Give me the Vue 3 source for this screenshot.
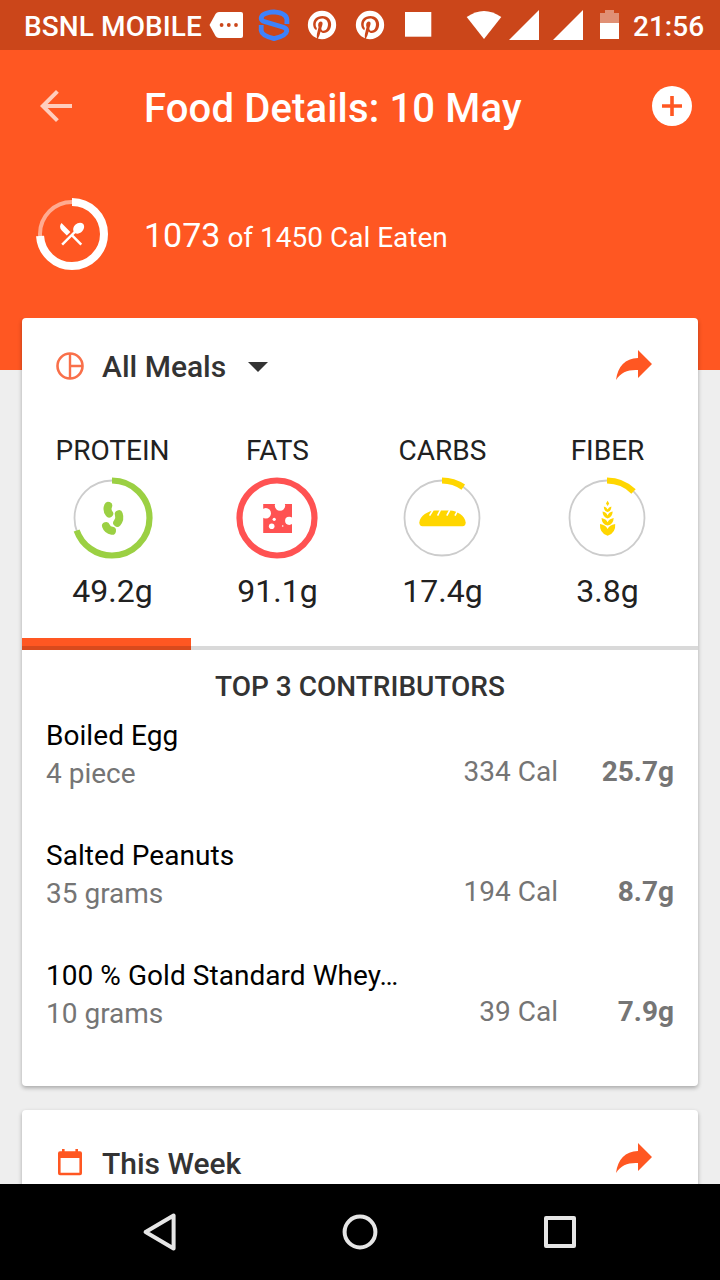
<template>
  <div class="screen">
    <div class="status-bar">
      <span class="carrier">BSNL MOBILE</span>
      <svg width="48" height="50" viewBox="0 0 48 50">
        <path d="M7.5 25 13.5 14Q14.7 12 17 12H39q2 0 2 2V36q0 2-2 2H17q-2.3 0-3.5-2z" fill="#fff" />
        <circle v-for="x in [19.6, 26.8, 34]" :key="x" :cx="x" cy="25" r="1.9" fill="#cb461a" />
      </svg>
      <svg width="48" height="50" viewBox="0 0 48 50">
        <path
          d="M36.9 24V19.5C36.6 15 33 12.6 24 11.8C15 12.4 11.4 15 11.2 18.2C11.2 20.6 13 21.2 15 21.8L33.4 27.2C35.8 28 36.8 29 36.8 31C36.4 34.4 31 37 24 38.6C17 37 11.6 34.4 11.2 30.6V25"
          fill="none"
          stroke="#3e82fb"
          stroke-width="4.8"
        />
      </svg>
      <svg v-for="n in 2" :key="n" class="pin" width="34" height="34" viewBox="0 0 24 24">
        <path :d="pinPath" fill="#fff" />
      </svg>
      <svg width="48" height="50" viewBox="0 0 48 50">
        <path d="M11 12H37.3V36.7H11z" fill="#fff" />
      </svg>
      <div class="system">
        <svg width="44" height="50" viewBox="0 0 44 50">
          <path d="M4.7 17Q22 5 39.3 17L22 39z" fill="#fff" />
        </svg>
        <svg v-for="n in 2" :key="n" width="44" height="50" viewBox="0 0 44 50">
          <path d="M3 40 33 10V40z" fill="#fff" />
        </svg>
        <svg width="32" height="50" viewBox="0 0 32 50">
          <path d="M6 23V13H11V10H20V13H25V23z" fill="#fff" opacity="0.4" />
          <path d="M6 23H25V39H6z" fill="#fff" />
        </svg>
        <span class="clock">21:56</span>
      </div>
    </div>

    <header class="header">
      <div class="toolbar">
        <svg width="48" height="48" viewBox="0 0 24 24">
          <path d="M20 11H7.83l5.59-5.59L12 4l-8 8 8 8 1.41-1.41L7.83 13H20v-2z" fill="#fff" opacity="0.7" />
        </svg>
        <h1>Food Details: 10 May</h1>
        <svg width="40" height="40" viewBox="0 0 40 40">
          <circle cx="20" cy="20" r="20" fill="#fff" />
          <path d="M20 10V30M10 20H30" stroke="#ff5722" stroke-width="3.6" />
        </svg>
      </div>
      <div class="summary">
        <svg width="72" height="72" viewBox="0 0 72 72">
          <circle cx="36" cy="36" r="32" fill="none" stroke="#fff" stroke-opacity="0.5" stroke-width="4" />
          <circle
            cx="36"
            cy="36"
            r="32"
            fill="none"
            stroke="#fff"
            stroke-width="8"
            pathLength="100"
            stroke-dasharray="74 100"
            transform="rotate(-90 36 36)"
          />
          <path :d="diningPath" fill="#fff" transform="translate(20.6 20.7) scale(1.26)" />
        </svg>
        <p><span class="eaten">1073</span> of 1450 Cal Eaten</p>
      </div>
    </header>

    <main>
      <section class="card meals">
        <div class="card-head">
          <svg width="28" height="28" viewBox="0 0 28 28">
            <circle cx="14" cy="14" r="12.5" fill="none" stroke="#f9704a" stroke-width="2.6" />
            <path d="M14 2V26M14 14H26" stroke="#f9704a" stroke-width="2.4" />
          </svg>
          <h2>All Meals</h2>
          <svg class="caret" width="20" height="10" viewBox="0 0 20 10">
            <path d="M0 0H20L10 10z" fill="#333" />
          </svg>
          <svg class="share" width="36" height="30" viewBox="0 0 36 30">
            <path :d="sharePath" fill="#ff5722" />
          </svg>
        </div>

        <div class="macros">
          <div v-for="m in macros" :key="m.name" class="macro">
            <span class="macro-name">{{ m.name }}</span>
            <svg class="ring" width="82" height="82" viewBox="0 0 82 82">
              <circle cx="41" cy="41" r="37.5" fill="none" stroke="#ccc" stroke-width="1.8" />
              <circle
                cx="41"
                cy="41"
                r="37.5"
                fill="none"
                :stroke="m.color"
                stroke-width="6.2"
                pathLength="100"
                :stroke-dasharray="m.percent + ' 100'"
                transform="rotate(-90 41 41)"
              />
              <!-- beans -->
              <g v-if="m.name === 'PROTEIN'" fill="none" :stroke="m.color" stroke-width="8" stroke-linecap="round">
                <path d="M37.2 28.8Q35.4 33 38.2 36.6" />
                <path d="M47.8 37.2Q49.4 42 46.2 45.8" />
                <path d="M35 49Q36.4 53 41 53.8" />
              </g>
              <!-- cheese -->
              <g v-else-if="m.name === 'FATS'" fill="#fff">
                <path d="M27.2 27H56V56H27.2z" :fill="m.color" />
                <circle cx="44" cy="28.6" r="5.2" />
                <circle cx="29.8" cy="36.3" r="5.2" />
                <circle cx="53.2" cy="43.8" r="4.1" />
                <circle cx="38.2" cy="42.3" r="1.6" />
                <circle cx="35.7" cy="49.3" r="2.8" />
                <circle cx="46.7" cy="49" r="0.8" />
              </g>
              <!-- bread -->
              <g v-else-if="m.name === 'CARBS'">
                <path
                  d="M21.5 49.3Q18.3 49 18.3 45.5C19 38.5 27 34 34 33.5H49C56 34 64 38.5 64.7 45.5Q64.7 49 61.5 49.3z"
                  :fill="m.color"
                />
                <path d="M32 33 28.6 38.6M39.4 33 36.6 38.6M48.8 33 45.8 38.6M56.4 34 54 38.6" stroke="#fff" stroke-width="1.6" />
              </g>
              <!-- wheat -->
              <g v-else :fill="m.color">
                <path d="M41.6 23.8 43.2 26.6 41.6 29 40 26.6z" />
                <path d="M41.6 35Q38 34.4 37.8 29.6 40.6 30 41.6 32.6 42.6 30 45.4 29.6 45.2 34.4 41.6 35z" />
                <path d="M41.6 41.4Q36.8 40.4 36.5 34.6 40.4 35.4 41.6 38.4 42.8 35.4 46.7 34.6 46.4 40.4 41.6 41.4z" />
                <path d="M41.6 48.6Q35.8 47.4 35.5 41 40.2 42 41.6 45.2 43 42 47.7 41 47.4 47.4 41.6 48.6z" />
                <path d="M41.6 58.8Q33.2 56 34 47 40 48 41.6 52 43.2 48 49.2 47 50 56 41.6 58.8z" />
              </g>
            </svg>
            <span class="macro-value">{{ m.value }}</span>
          </div>
        </div>
        <div class="tab-line"><div class="tab-active"></div></div>

        <h3>TOP 3 CONTRIBUTORS</h3>
        <div v-for="item in contributors" :key="item.name" class="food">
          <div class="food-info">
            <div class="food-name">{{ item.name }}</div>
            <div class="food-portion">{{ item.portion }}</div>
          </div>
          <span class="food-cal">{{ item.cal }} Cal</span>
          <span class="food-amount">{{ item.amount }}</span>
        </div>
      </section>

      <section class="card week">
        <div class="card-head">
          <svg width="28" height="28" viewBox="0 0 28 28">
            <path
              d="M6 1H8.6V3.2H19.4V1H22V3.2H24q2 0 2 2V25.2q0 2-2 2H4q-2 0-2-2V5.2q0-2 2-2H6zM4.6 10V24.8H23.4V10z"
              fill="#ff5722"
              fill-rule="evenodd"
            />
          </svg>
          <h2>This Week</h2>
          <svg class="share" width="36" height="30" viewBox="0 0 36 30">
            <path :d="sharePath" fill="#ff5722" />
          </svg>
        </div>
      </section>
    </main>

    <nav class="nav-bar">
      <svg width="48" height="48" viewBox="0 0 48 48">
        <path d="M37.6 7.6V40.4L9.6 24z" />
      </svg>
      <svg width="48" height="48" viewBox="0 0 48 48">
        <circle cx="24" cy="24" r="15.4" />
      </svg>
      <svg width="48" height="48" viewBox="0 0 48 48">
        <rect x="10" y="10" width="28" height="28" />
      </svg>
    </nav>
  </div>
</template>

<script setup>
import { ref } from 'vue';

const macros = ref([
  { name: 'PROTEIN', value: '49.2g', color: '#9bd043', percent: 69.6 },
  { name: 'FATS', value: '91.1g', color: '#ff5252', percent: 100 },
  { name: 'CARBS', value: '17.4g', color: '#ffd600', percent: 9.6 },
  { name: 'FIBER', value: '3.8g', color: '#ffd600', percent: 12.5 },
]);

const contributors = ref([
  { name: 'Boiled Egg', portion: '4 piece', cal: 334, amount: '25.7g' },
  { name: 'Salted Peanuts', portion: '35 grams', cal: 194, amount: '8.7g' },
  { name: '100 % Gold Standard Whey…', portion: '10 grams', cal: 39, amount: '7.9g' },
]);

// icon paths
const sharePath = 'M0 30C2 16 9 8.6 22 8V0L36 14 22 28V20C12 19.5 5 22 0 30z';
const diningPath =
  'M8.1 13.34l2.83-2.83L3.91 3.5c-1.56 1.56-1.56 4.09 0 5.66l4.19 4.18zm6.78-1.81c1.53.71 3.68.21 5.27-1.38 1.91-1.91 2.28-4.65.81-6.12-1.46-1.46-4.2-1.1-6.12.81-1.59 1.59-2.09 3.74-1.38 5.27L3.7 19.87l1.41 1.41L12 14.41l6.88 6.88 1.41-1.41L13.41 13l1.47-1.47z';
const pinPath =
  'M9.04 21.54C10 21.83 10.97 22 12 22A10 10 0 0 0 22 12 10 10 0 0 0 12 2 10 10 0 0 0 2 12C2 16.25 4.67 19.9 8.44 21.34 8.35 20.56 8.26 19.27 8.44 18.38L9.59 13.44S9.3 12.86 9.3 11.94C9.3 10.56 10.16 9.53 11.14 9.53 12 9.53 12.4 10.16 12.4 10.97 12.4 11.83 11.83 13.06 11.54 14.24 11.37 15.22 12.06 16.08 13.06 16.08 14.84 16.08 16.22 14.18 16.22 11.5 16.22 9.1 14.5 7.46 12.03 7.46 9.21 7.46 7.55 9.56 7.55 11.77 7.55 12.63 7.83 13.5 8.29 14.07 8.38 14.13 8.38 14.21 8.35 14.36L8.06 15.45C8.06 15.62 7.95 15.68 7.78 15.56 6.5 15 5.76 13.18 5.76 11.71 5.76 8.55 8 5.68 12.32 5.68 15.76 5.68 18.44 8.15 18.44 11.43 18.44 14.87 16.31 17.63 13.26 17.63 12.29 17.63 11.34 17.11 11 16.5L10.33 18.87C10.1 19.73 9.47 20.88 9.04 21.54z';
</script>

<style>
body {
  margin: 0;
}
</style>

<style scoped>
.screen {
  display: flex;
  flex-direction: column;
  width: 720px;
  height: 1280px;
  overflow: hidden;
  background: #eee;
  color: #212121;
  font-family: Roboto, "Noto Sans", sans-serif;
  font-size: 28px;
}

svg {
  display: block;
  flex: none;
}

h1,
h2,
h3,
p {
  margin: 0;
  font-weight: 500;
  white-space: nowrap;
}

.status-bar {
  display: flex;
  align-items: center;
  flex: none;
  height: 50px;
  padding: 0 16px 0 24px;
  background: #cb461a;
  color: #fff;
  font-weight: 500;
}

.carrier {
  width: 178px;
  padding-top: 3px;
  letter-spacing: 0.1px;
  white-space: nowrap;
}

.pin {
  margin: 0 7px;
}

.system {
  display: flex;
  align-items: center;
  margin-left: auto;
}

.clock {
  width: 71px;
  margin-left: 7px;
  padding-top: 3px;
}

.header {
  flex: none;
  height: 320px;
  background: #ff5722;
  color: #fff;
}

.toolbar {
  display: flex;
  align-items: center;
  height: 112px;
  padding: 0 28px 0 32px;
}

.toolbar h1 {
  flex: 1;
  padding: 4px 0 0 64px;
  font-size: 40px;
  letter-spacing: 0.15px;
}

.summary {
  display: flex;
  align-items: center;
  height: 72px;
  margin-top: 36px;
  padding-left: 36px;
}

.summary p {
  margin-left: 36px;
  padding-top: 2px;
  font-weight: 400;
}

.eaten {
  font-size: 34px;
}

main {
  display: flex;
  flex-direction: column;
  flex: 1;
  gap: 24px;
  min-height: 0;
  margin-top: -52px;
  padding: 0 22px;
  overflow: hidden;
}

.card {
  flex: none;
  box-sizing: border-box;
  border-radius: 4px;
  background: #fff;
  box-shadow: 0 2px 4px rgba(0, 0, 0, 0.3);
}

.meals {
  height: 768px;
}

.week {
  height: 200px;
}

.card-head {
  display: flex;
  align-items: center;
  height: 96px;
  padding: 0 46px 0 34px;
}

.card-head h2 {
  margin-left: 18px;
  color: #333;
  font-size: 30px;
}

.week .card-head {
  height: 104px;
}

.week .card-head h2 {
  padding-top: 2px;
}

.caret {
  margin: 2px 0 0 22px;
}

.share {
  margin: 0 0 2px auto;
}

.week .share {
  margin-bottom: 8px;
}

.macros {
  display: flex;
  height: 224px;
  padding: 0 8px;
}

.macro {
  display: flex;
  flex: 1;
  flex-direction: column;
  align-items: center;
}

.macro-name {
  height: 40px;
  margin: 16px 0 7px;
  line-height: 41px;
}

.ring {
  margin-right: 1px;
}

.macro-value {
  margin-top: 12px;
  font-size: 32px;
  line-height: 40px;
}

.tab-line {
  height: 12px;
  background: linear-gradient(#fff 8px, #d9d9d9 8px);
}

.tab-active {
  width: 25%;
  height: 12px;
  background: linear-gradient(#ff5722 8px, #d94a1d 8px);
}

h3 {
  height: 65px;
  color: #333;
  font-size: 28px;
  line-height: 73px;
  text-align: center;
}

.food {
  display: flex;
  height: 120px;
  padding: 0 24px;
  color: #757575;
}

.food-info {
  flex: 1;
  line-height: 38px;
}

.food-name {
  margin-top: 2px;
  color: #000;
  letter-spacing: 0.05px;
  white-space: nowrap;
}

.food-cal,
.food-amount {
  padding-top: 38px;
  line-height: 38px;
  text-align: right;
}

.food-amount {
  width: 116px;
  font-weight: 700;
}

.nav-bar {
  display: flex;
  align-items: center;
  justify-content: space-around;
  flex: none;
  height: 96px;
  padding: 0 60px;
  background: #000;
}

.nav-bar svg {
  fill: none;
  stroke: #e6e6e6;
  stroke-width: 4;
  stroke-linejoin: round;
}
</style>
